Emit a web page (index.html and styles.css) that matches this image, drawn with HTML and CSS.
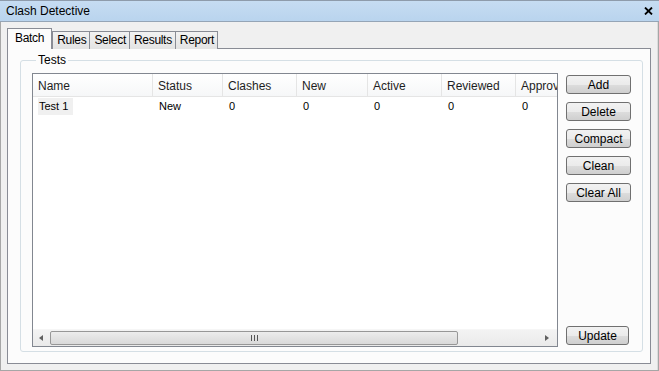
FILE: index.html
```html
<!DOCTYPE html>
<html lang="en">
  <head>
    <meta charset="UTF-8" />
    <title>Clash Detective</title>
    <link rel="stylesheet" href="styles.css">
  </head>

  <body>
    <div class="window">
      <div class="titlebar">
        <span class="title">Clash Detective</span>
        <svg class="close" width="9" height="8" viewBox="0 0 9 8">
          <path d="M1 0.5 L8 7.5 M8 0.5 L1 7.5" stroke="#000" stroke-width="1.8" />
        </svg>
      </div>

      <div class="content">
        <!-- tab strip -->
        <div class="tabs">
          <div class="tab active">Batch</div>
          <div class="tab">Rules</div>
          <div class="tab">Select</div>
          <div class="tab">Results</div>
          <div class="tab">Report</div>
        </div>

        <div class="page">
          <fieldset class="group">
            <legend>Tests</legend>
            <div class="group-body">
              <div class="list">
                <div class="list-view">
                  <div class="row header">
                    <div class="cell c-name">Name</div>
                    <div class="cell c-status">Status</div>
                    <div class="cell c-num">Clashes</div>
                    <div class="cell c-new">New</div>
                    <div class="cell c-num">Active</div>
                    <div class="cell c-num">Reviewed</div>
                    <div class="cell c-last">Approve</div>
                  </div>
                  <div class="row item">
                    <div class="cell c-name"><span class="sel">Test 1</span></div>
                    <div class="cell c-status">New</div>
                    <div class="cell c-num">0</div>
                    <div class="cell c-new">0</div>
                    <div class="cell c-num">0</div>
                    <div class="cell c-num">0</div>
                    <div class="cell c-last">0</div>
                  </div>
                </div>

                <div class="hscroll">
                  <div class="arrow left"></div>
                  <div class="track">
                    <div class="thumb"><span class="grip"></span></div>
                  </div>
                  <div class="arrow right"></div>
                </div>
              </div>

              <div class="buttons">
                <button class="btn">Add</button>
                <button class="btn">Delete</button>
                <button class="btn">Compact</button>
                <button class="btn">Clean</button>
                <button class="btn">Clear All</button>
                <button class="btn update">Update</button>
              </div>
            </div>
          </fieldset>
        </div>
      </div>
    </div>
  </body>
</html>
```

FILE: styles.css
```css
html,
body {
  margin: 0;
  padding: 0;
  background-color: #f0f0f0;
  font-family: "Liberation Sans", Arial, sans-serif;
  font-size: 11px;
  color: #000;
}

.window {
  width: 659px;
  height: 371px;
  box-sizing: border-box;
  border-left: 1px solid #a6a6a6;
  border-right: 1px solid #a6a6a6;
  border-bottom: 1px solid #a6a6a6;
  display: flex;
  flex-direction: column;
}

.titlebar {
  height: 22px;
  box-sizing: border-box;
  border-top: 1px solid #8e9bab;
  border-bottom: 1px solid #95a5b6;
  background: linear-gradient(#c6dcf2, #b9d4ee);
  display: flex;
  align-items: center;
  justify-content: space-between;
  padding: 0 6px 0 6px;
  margin: 0 -1px;
}

.title {
  font-size: 12px;
}

.content {
  flex: 1;
  display: flex;
  flex-direction: column;
  padding: 6px 6px 6px 6px;
  border-right: 1px solid #dcdcdc;
}

.tabs {
  display: flex;
  align-items: flex-end;
  height: 21px;
  position: relative;
  z-index: 2;
  margin-bottom: -1px;
}

.tab {
  height: 18px;
  box-sizing: border-box;
  border: 1px solid #898c95;
  border-bottom: none;
  margin-right: -1px;
  padding: 0 3px 0 4px;
  background: linear-gradient(#f2f2f2, #e3e3e3);
  line-height: 17px;
  font-size: 12px;
  letter-spacing: -0.3px;
}

.tab.active {
  height: 21px;
  background: #fcfcfc;
  padding: 0 7px;
  line-height: 18px;
  margin-right: 0;
}

.page {
  flex: 1;
  border: 1px solid #898c95;
  background: #fcfcfc;
  display: flex;
  padding: 4px 7px 11px 12px;
}

.group {
  flex: 1;
  margin: 0;
  border: 1px solid #d5dfe5;
  border-radius: 3px;
  padding: 6px 10px 4px 11px;
  display: flex;
  min-width: 0;
}

.group legend {
  padding: 0 2px;
  margin-left: 4px;
  font-size: 12px;
}

.group-body {
  flex: 1;
  display: flex;
  gap: 8px;
  min-width: 0;
}

.list {
  flex: 1;
  border: 1px solid #828790;
  background: #fff;
  display: flex;
  flex-direction: column;
  min-width: 0;
}

.list-view {
  flex: 1;
  overflow: hidden;
}

.row {
  display: flex;
  white-space: nowrap;
}

.header {
  height: 23px;
  box-sizing: border-box;
  border-bottom: 1px solid #e5e5e5;
  background: linear-gradient(#fff, #f6f7f8);
  color: #1e1e1e;
  font-size: 12px;
}

.header .cell {
  border-right: 1px solid #e5e5e5;
  line-height: 24px;
}

.item {
  height: 19px;
  line-height: 19px;
}

.cell {
  flex: none;
  box-sizing: border-box;
  padding-left: 5px;
  overflow: hidden;
}

.c-name {
  width: 120px;
}

.c-status {
  width: 70px;
}

.c-num {
  width: 74px;
}

.c-new {
  width: 71px;
}

.c-last {
  width: 46px;
}

.item .cell {
  padding-left: 6px;
}

.sel {
  display: inline-block;
  background: #f0f0f0;
  padding: 0 5px 0 1px;
  margin-left: -1px;
  line-height: 17px;
}

.hscroll {
  height: 16px;
  display: flex;
  align-items: center;
  background: linear-gradient(#f3f3f3, #eaeaea);
  border-top: 1px solid #f6f6f6;
}

.arrow {
  width: 17px;
  height: 16px;
  position: relative;
}

.arrow::after {
  content: "";
  position: absolute;
  top: 5px;
  border-top: 3px solid transparent;
  border-bottom: 3px solid transparent;
}

.arrow.left::after {
  left: 6px;
  border-right: 4px solid #606060;
}

.arrow.right::after {
  right: 8px;
  border-left: 4px solid #606060;
}

.track {
  flex: 1;
  height: 16px;
  display: flex;
  align-items: center;
}

.thumb {
  width: 408px;
  height: 14px;
  box-sizing: border-box;
  border: 1px solid #979797;
  border-radius: 2px;
  background: linear-gradient(#ececec, #d9d9d9);
  display: flex;
  align-items: center;
  justify-content: center;
}

.grip {
  width: 7px;
  height: 6px;
  border-left: 1px solid #555;
  border-right: 1px solid #555;
  box-sizing: border-box;
  background: linear-gradient(90deg, transparent 2px, #555 2px, #555 3px, transparent 3px);
}

.buttons {
  width: 66px;
  display: flex;
  flex-direction: column;
  gap: 8px;
  padding-top: 2px;
}

.btn {
  height: 19px;
  width: 65px;
  box-sizing: border-box;
  border: 1px solid #707070;
  border-radius: 3px;
  background: linear-gradient(#f2f2f2 0%, #ebebeb 50%, #dddddd 51%, #cfcfcf 100%);
  font-family: "Liberation Sans", Arial, sans-serif;
  font-size: 12px;
  color: #000;
  padding: 0;
  line-height: 16px;
}

.update {
  margin-top: auto;
  width: 63px;
  margin-bottom: 2px;
}
```
